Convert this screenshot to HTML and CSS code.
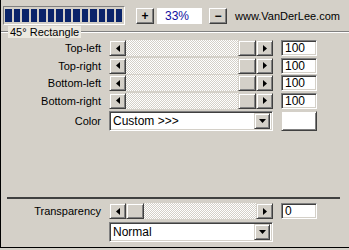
FILE: index.html
```html
<!DOCTYPE html>
<html lang="en">
<head>
  <meta charset="UTF-8">
  <title>45° Rectangle</title>
  <link rel="stylesheet" href="styles.css">
</head>
<body>

<div class="panel">
  <div class="topbar">
    <div class="progress">
      <span class="blk"></span><span class="blk"></span><span class="blk"></span><span class="blk"></span>
      <span class="blk"></span><span class="blk"></span><span class="blk"></span><span class="blk"></span>
      <span class="blk"></span><span class="blk"></span><span class="blk"></span><span class="blk"></span>
      <span class="blk"></span><span class="blk"></span>
    </div>
    <span class="btn plus">+</span>
    <span class="pct">33%</span>
    <span class="btn minus">&minus;</span>
    <span class="url">www.VanDerLee.com</span>
  </div>

  <div class="group">
    <span class="legend">45° Rectangle</span>
    <div class="rows corners">
      <span class="lbl">Top-left</span>
      <div class="scroll">
        <span class="arrow"><svg width="4" height="7"><path d="M4 0V7L0 3.5z"/></svg></span>
        <span class="track"></span><span class="thumb"></span>
        <span class="arrow"><svg width="4" height="7"><path d="M0 0V7L4 3.5z"/></svg></span>
      </div>
      <span class="num">100</span>

      <span class="lbl">Top-right</span>
      <div class="scroll">
        <span class="arrow"><svg width="4" height="7"><path d="M4 0V7L0 3.5z"/></svg></span>
        <span class="track"></span><span class="thumb"></span>
        <span class="arrow"><svg width="4" height="7"><path d="M0 0V7L4 3.5z"/></svg></span>
      </div>
      <span class="num">100</span>

      <span class="lbl">Bottom-left</span>
      <div class="scroll">
        <span class="arrow"><svg width="4" height="7"><path d="M4 0V7L0 3.5z"/></svg></span>
        <span class="track"></span><span class="thumb"></span>
        <span class="arrow"><svg width="4" height="7"><path d="M0 0V7L4 3.5z"/></svg></span>
      </div>
      <span class="num">100</span>

      <span class="lbl">Bottom-right</span>
      <div class="scroll">
        <span class="arrow"><svg width="4" height="7"><path d="M4 0V7L0 3.5z"/></svg></span>
        <span class="track"></span><span class="thumb"></span>
        <span class="arrow"><svg width="4" height="7"><path d="M0 0V7L4 3.5z"/></svg></span>
      </div>
      <span class="num">100</span>

      <span class="lbl tall">Color</span>
      <div class="combo">
        <span class="combo-text">Custom &gt;&gt;&gt;</span>
        <span class="drop"><svg width="7" height="4"><path d="M0 0H7L3.5 4z"/></svg></span>
      </div>
      <span class="swatch"></span>
    </div>
  </div>

  <div class="spacer"></div>
  <div class="sep"></div>

  <div class="rows bottom">
    <span class="lbl">Transparency</span>
    <div class="scroll">
      <span class="arrow"><svg width="4" height="7"><path d="M4 0V7L0 3.5z"/></svg></span>
      <span class="thumb"></span><span class="track"></span>
      <span class="arrow"><svg width="4" height="7"><path d="M0 0V7L4 3.5z"/></svg></span>
    </div>
    <span class="num">0</span>

    <span></span>
    <div class="combo">
      <span class="combo-text">Normal</span>
      <span class="drop"><svg width="7" height="4"><path d="M0 0H7L3.5 4z"/></svg></span>
    </div>
    <span></span>
  </div>
</div>

</body>
</html>
```

FILE: styles.css
```css
body {
  margin: 0;
  background: #d4d0c8;
  font-family: "Liberation Sans", Arial, sans-serif;
  font-size: 11px;
  color: #000;
}

.panel {
  width: 349px;
  height: 248px;
  box-sizing: border-box;
  border-left: 1px solid #000;
  border-bottom: 1px solid #000;
  display: flex;
  flex-direction: column;
}

/* top bar */
.topbar {
  height: 31px;
  display: flex;
  align-items: center;
}

.progress {
  margin-left: 2px;
  width: 122px;
  height: 19px;
  box-sizing: border-box;
  border: 1px solid;
  border-color: #808080 #fff #fff #808080;
  padding: 2px 2px 2px 1px;
  display: flex;
  gap: 2px;
}

.blk {
  flex: 1;
  background: #0a246a;
}

.btn {
  width: 18px;
  height: 16px;
  box-sizing: border-box;
  display: flex;
  align-items: center;
  justify-content: center;
  font-weight: bold;
  font-size: 12px;
  background: #d4d0c8;
  border: 1px solid;
  border-color: #fff #404040 #404040 #fff;
  box-shadow: inset -1px -1px #808080;
}

.plus { margin-left: 11px; }

.pct {
  width: 45px;
  height: 16px;
  margin-left: 3px;
  background: #fff;
  color: #1010a0;
  font-size: 12px;
  line-height: 16px;
  padding-left: 8px;
  box-sizing: border-box;
}

.minus { margin-left: 7px; }

.url {
  margin-left: 8px;
  font-size: 11px;
}

/* group box */
.group {
  position: relative;
  border-top: 1px solid #808080;
  box-shadow: inset 0 1px #fff;
  padding-top: 8px;
}

.legend {
  position: absolute;
  left: 7px;
  top: -6px;
  padding: 0 2px;
  height: 12px;
  line-height: 12px;
  background: #ece9e0;
}

.rows {
  display: grid;
  grid-template-columns: 100px 164px 36px;
  column-gap: 8px;
}

.corners {
  grid-template-rows: repeat(4, 16px) 20px;
  row-gap: 1.5px;
}

.corners .combo, .corners .swatch, .corners .tall { margin-top: 1px; }

.lbl {
  text-align: right;
  line-height: 16px;
}

.lbl.tall { line-height: 20px; }

.scroll {
  display: flex;
  height: 16px;
}

.arrow, .thumb {
  width: 17px;
  height: 16px;
  box-sizing: border-box;
  display: flex;
  align-items: center;
  justify-content: center;
  background: #d4d0c8;
  border: 1px solid;
  border-color: #d4d0c8 #404040 #404040 #d4d0c8;
  box-shadow: inset 1px 1px #fff, inset -1px -1px #808080;
}

.thumb { width: 18px; }

.track {
  flex: 1;
  background: repeating-conic-gradient(#fff 0 25%, #d4d0c8 0 50%) 0 0 / 2px 2px;
}

.num, .combo {
  background: #fff;
  box-sizing: border-box;
  border: 1px solid;
  border-color: #808080 #fff #fff #808080;
  box-shadow: inset 1px 1px #404040, inset -1px -1px #d4d0c8;
}

.num {
  height: 16px;
  padding-left: 3px;
  line-height: 14px;
  font-size: 12px;
}

.combo {
  display: flex;
  align-items: center;
  height: 20px;
  padding: 2px;
}

.combo-text {
  flex: 1;
  padding-left: 1px;
  font-size: 12px;
}

.drop {
  width: 16px;
  height: 16px;
  box-sizing: border-box;
  display: flex;
  align-items: center;
  justify-content: center;
  background: #d4d0c8;
  border: 1px solid;
  border-color: #d4d0c8 #404040 #404040 #d4d0c8;
  box-shadow: inset 1px 1px #fff, inset -1px -1px #808080;
}

.swatch {
  height: 20px;
  box-sizing: border-box;
  background: #fff;
  border: 1px solid;
  border-color: #d4d0c8 #404040 #404040 #d4d0c8;
  box-shadow: inset 1px 1px #fff, inset -1px -1px #808080;
}

.spacer { flex: 1; }

.sep {
  margin: 0 9px 4px 6px;
  height: 2px;
  background: #404040;
}

.bottom {
  grid-template-rows: 16px 20px;
  row-gap: 3px;
  margin-bottom: 5px;
}
```
